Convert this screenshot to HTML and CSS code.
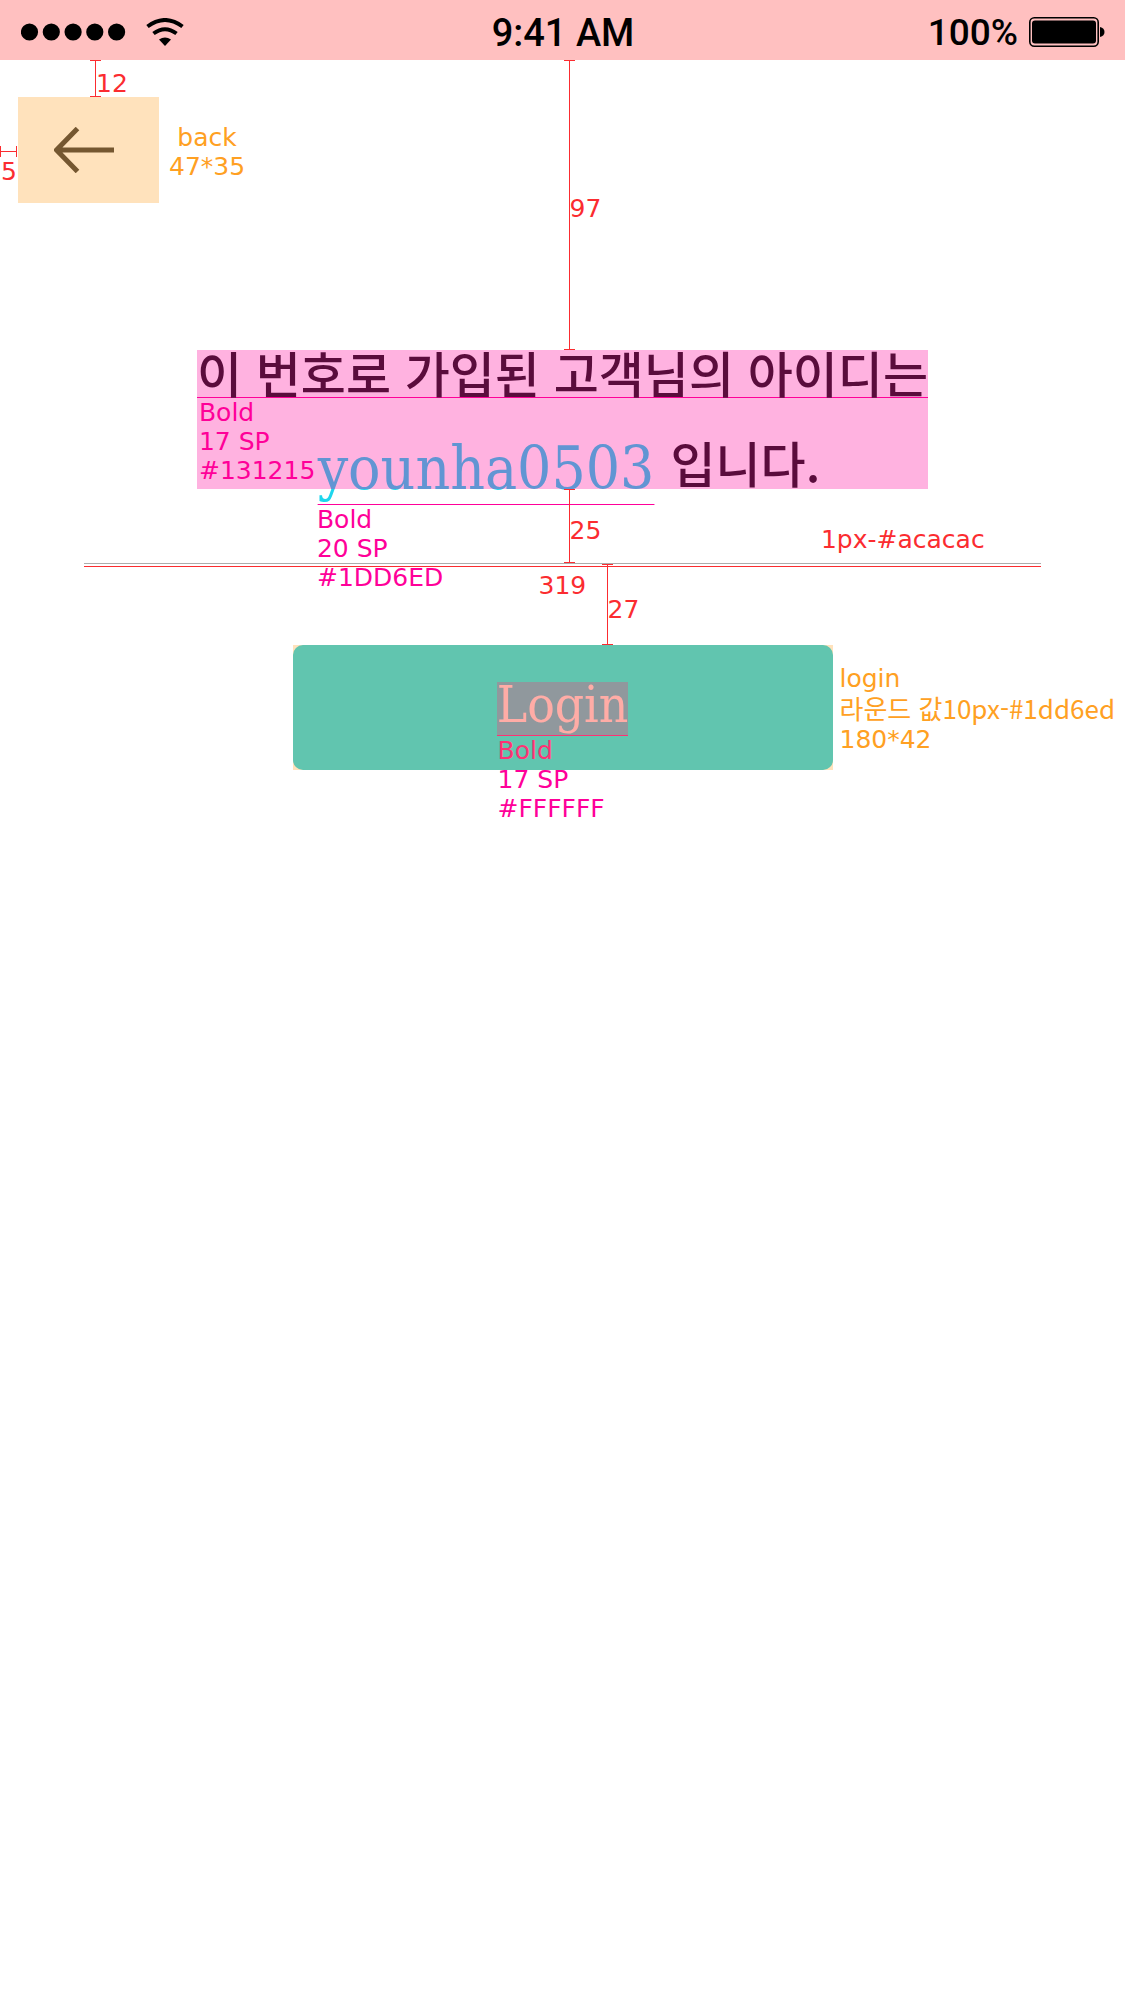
FILE: index.html
```html
<!DOCTYPE html>
<html lang="ko">
<head>
<meta charset="utf-8">
<meta name="viewport" content="width=device-width, initial-scale=1">
<title>아이디 찾기</title>
<link rel="stylesheet" href="styles.css">
</head>
<body>
<header class="status">
  <div class="status-side">
    <svg width="105" height="18" viewBox="0 0 105 18" aria-hidden="true">
      <circle cx="8.500" cy="9" r="8.600"/><circle cx="30.300" cy="9" r="8.600"/><circle cx="52.100" cy="9" r="8.600"/><circle cx="73.800" cy="9" r="8.600"/><circle cx="95.600" cy="9" r="8.600"/>
    </svg>
    <svg width="38" height="29" viewBox="0 0 38 29" aria-hidden="true">
      <path d="M1.500 8.500Q19-4.500 36.500 8.500M7.500 15.500Q19 7 30.500 15.500" fill="none" stroke="#000" stroke-width="4"/>
      <path d="M13 21.500Q19 17.500 25 21.500L19 28Z"/>
    </svg>
  </div>
  <span class="status-text">9:41 AM</span>
  <div class="status-side status-end">
    <span class="status-text charge">100%</span>
    <svg width="76" height="30" viewBox="0 0 76 30" aria-hidden="true">
      <rect x="0.800" y="0.800" width="68.400" height="28.400" rx="4.500" fill="none" stroke="#000" stroke-width="1.600"/>
      <rect x="3" y="3.500" width="64" height="23" rx="3"/>
      <path d="M71 10C77 11 77 19 71 20Z"/>
    </svg>
  </div>
</header>

<main class="screen">
  <div class="measure gap-12"><span>12</span></div>
  <div class="measure gap-97"><span>97</span></div>

  <nav class="back-row">
    <div class="measure-x"><span>5</span></div>
    <button class="back" type="button" aria-label="back">
      <svg width="62" height="46" viewBox="0 0 62 46" fill="none" stroke="#755730" stroke-width="5" aria-hidden="true">
        <path d="M3 23H60M23.500 1.500L2.500 23L23.500 44.500"/>
      </svg>
    </button>
    <p class="size-note back-note">back<br>47*35</p>
  </nav>

  <section class="message">
    <p class="message-text">
      <span class="line-one">이 번호로 가입된 고객님의 아이디는</span>
      <span class="line-two"><span class="user">younha0503</span> <span class="ending">입니다.</span></span>
    </p>
    <p class="type-note message-note">Bold<br>17 SP<br>#131215</p>
    <p class="type-note user-note">Bold<br>20 SP<br>#1DD6ED</p>
    <div class="measure gap-25"><span>25</span></div>
  </section>

  <div class="divider">
    <span class="divider-spec">1px-#acacac</span>
    <span class="divider-width">319</span>
    <div class="measure gap-27"><span>27</span></div>
  </div>

  <div class="login-row">
    <div class="login-area">
      <button class="login" type="button"><span class="login-label">Login</span></button>
      <p class="type-note login-type">Bold<br>17 SP<br>#FFFFFF</p>
    </div>
    <p class="size-note login-note">login<br><span class="korean">라운드 값10px-#1dd6ed</span><br>180*42</p>
  </div>
</main>
</body>
</html>
```
FILE: styles.css
```css
* {
  box-sizing: border-box;
}

:root {
  --red: #fb2c30;
  --magenta: #ff0099;
  --orange: #ffa022;
  --pink-tint: rgba(255, 0, 153, 0.3);
  --orange-tint: rgba(255, 160, 34, 0.3);
}

body {
  min-height: 100vh;
  margin: 0;
  background: #fff;
  font: 25px/29px "DejaVu Sans", "Noto Sans CJK KR", sans-serif;
}

p {
  margin: 0;
}

button {
  padding: 0;
  border: 0;
}

svg {
  display: block;
}

/* Status bar */
.status {
  display: flex;
  align-items: center;
  height: 60px;
  padding: 4px 20px 0 21px;
  background: #ffc0c0;
  color: #000;
  font: 500 38px/54px Roboto, sans-serif;
}

.status-text {
  padding-top: 2px;
}

.charge {
  font-size: 37px;
}

.status-side {
  display: flex;
  flex: 1;
  align-items: center;
  gap: 20px;
}

.status-end {
  justify-content: flex-end;
  gap: 11px;
}

.screen {
  position: relative;
  padding: 37px 0 60px;
}

/* Distance markers */
.measure {
  position: absolute;
  width: 11px;
  border: solid var(--red);
  border-width: 1px 0;
  background: linear-gradient(var(--red), var(--red)) center / 1px 100% no-repeat;
  color: var(--red);
}

.measure span {
  position: absolute;
  left: 6px;
}

.gap-12 {
  top: 0;
  left: 90px;
  height: 37px;
}

.gap-12 span {
  top: 8px;
}

.gap-97 {
  top: 0;
  left: calc(50% + 1px);
  height: 290px;
}

.gap-97 span {
  top: 133px;
}

.measure-x {
  position: absolute;
  top: 49px;
  left: 0;
  width: 17px;
  height: 11px;
  border: solid var(--red);
  border-width: 0 1px;
  background: linear-gradient(var(--red), var(--red)) center / 100% 1px no-repeat;
  color: var(--red);
}

.measure-x span {
  position: absolute;
  top: 11px;
  left: 0;
}

/* Back */
.back-row {
  position: relative;
  display: flex;
  align-items: center;
  gap: 10px;
  padding-left: 18px;
}

.back {
  display: grid;
  place-items: center start;
  width: 141px;
  height: 106px;
  padding-left: 36px;
  background: var(--orange-tint);
}

.size-note {
  padding-top: 2px;
  color: var(--orange);
}

.back-note {
  padding-top: 4px;
  text-align: center;
}

/* Message */
.message {
  position: relative;
  width: fit-content;
  margin: 147px auto 0;
  color: #131215;
}

.message::after {
  content: "";
  position: absolute;
  inset: 0;
  background: var(--pink-tint);
}

.message-text {
  font: 500 49px/44px "Noto Sans CJK KR", sans-serif;
}

.line-one {
  display: block;
  height: 48px;
  border-bottom: 1px solid var(--magenta);
}

.line-two {
  display: flex;
  justify-content: center;
  gap: 16px;
  height: 91px;
  padding: 36px 0 0 13px;
}

.user {
  color: #1dd6ed;
  font: 400 60px/68px "DejaVu Serif Condensed", "DejaVu Serif", serif;
  text-decoration: underline var(--magenta) 1px;
  text-decoration-skip-ink: none;
  text-underline-offset: 15px;
}

.ending {
  line-height: 56px;
}

.type-note {
  position: absolute;
  color: var(--magenta);
}

.message-note {
  top: 48px;
  left: 2px;
}

.user-note {
  top: 155px;
  left: 120px;
}

.gap-25 {
  top: 139px;
  left: calc(50% + 1px);
  height: 74px;
}

.gap-25 span {
  top: 26px;
}

/* Divider */
.divider {
  position: relative;
  width: 85%;
  height: 4px;
  margin: 74px auto 0;
  border-top: 1px solid #acacac;
  border-bottom: 1px solid var(--red);
  color: var(--red);
}

.divider-spec {
  position: absolute;
  right: 56px;
  bottom: 12px;
}

.divider-width {
  position: absolute;
  top: 7px;
  left: calc(50% - 24px);
}

.gap-27 {
  top: 0;
  left: calc(50% + 39px);
  height: 81px;
}

.gap-27 span {
  top: 30px;
}

/* Login */
.login-row {
  display: grid;
  grid-template-columns: 1fr 540px 1fr;
  align-items: center;
  gap: 7px;
  margin-top: 78px;
}

.login-area {
  position: relative;
  grid-column: 2;
}

.login-area::after {
  content: "";
  position: absolute;
  inset: 0;
  background: var(--orange-tint);
  pointer-events: none;
}

.login {
  display: grid;
  place-items: center;
  width: 100%;
  height: 125px;
  padding-top: 2px;
  border-radius: 10px;
  background: #1dd6ed;
  color: #fff;
  font: 400 51px/46px "DejaVu Serif Condensed", "DejaVu Serif", serif;
}

.login-label {
  position: relative;
  height: 54px;
  border-bottom: 1px solid var(--magenta);
}

.login-label::after {
  content: "";
  position: absolute;
  inset: 0;
  background: var(--pink-tint);
}

.login-type {
  top: 91px;
  left: 205px;
}

.login-note {
  min-width: 0;
  white-space: nowrap;
}

.korean {
  font-family: "Noto Sans CJK KR", sans-serif;
  font-size: 26px;
}
```
